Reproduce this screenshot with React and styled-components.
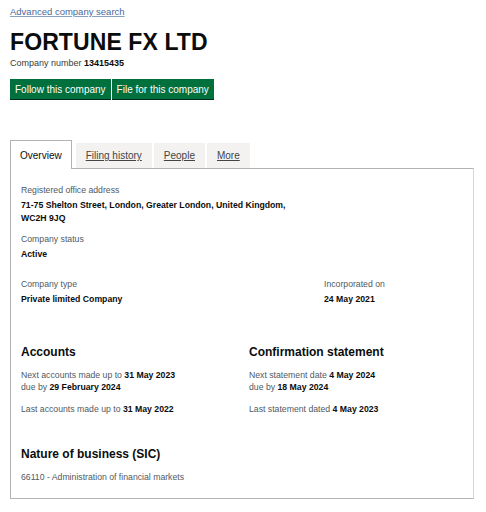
import styled, { createGlobalStyle } from "styled-components";

const Global = createGlobalStyle`
  body {
    margin: 0;
    background: #ffffff;
    font-family: "Liberation Sans", Arial, sans-serif;
    color: #0b0c0c;
  }
`;

const Page = styled.div`
  width: 486px;
  padding: 6px 12px 0 10px;
  box-sizing: border-box;
`;

const BackLink = styled.a`
  display: block;
  font-size: 9.5px;
  line-height: 12px;
  color: #4a6a9a;
  text-decoration: underline;
  text-decoration-color: #8aa0c0;
`;

const Title = styled.h1`
  margin: 12px 0 0;
  font-size: 23px;
  line-height: 24px;
  font-weight: 700;
  letter-spacing: 0.1px;
`;

const CompanyNumber = styled.p`
  margin: 3px 0 0;
  font-size: 9px;
  line-height: 12px;
  color: #3a3a3a;

  strong {
    color: #0b0c0c;
  }
`;

const Actions = styled.div`
  display: flex;
  gap: 1px;
  margin-top: 10px;
`;

const GreenButton = styled.button`
  height: 21px;
  padding: 0 5px;
  border: 0;
  border-bottom: 1px solid #002d18;
  background: #00703c;
  color: #ffffff;
  font-family: inherit;
  font-size: 10px;
  cursor: pointer;
`;

const Tabs = styled.div`
  display: flex;
  align-items: flex-end;
  gap: 2px;
  margin-top: 40px;
`;

const Tab = styled.a`
  display: flex;
  align-items: center;
  box-sizing: border-box;
  font-size: 10px;
  color: ${(p) => (p.$active ? "#0b0c0c" : "#444")};
  text-decoration: ${(p) => (p.$active ? "none" : "underline")};
  background: ${(p) => (p.$active ? "#ffffff" : "#f3f2f1")};
  border: ${(p) => (p.$active ? "1px solid #b1b4b6" : "0")};
  border-bottom: 0;
  height: ${(p) => (p.$active ? "29px" : "25px")};
  padding: 0 ${(p) => (p.$active ? "9px" : "10px")};
  margin-right: ${(p) => (p.$active ? "2px" : "0")};
  margin-bottom: ${(p) => (p.$active ? "-1px" : "0")};
  position: relative;
  z-index: ${(p) => (p.$active ? 1 : 0)};
`;

const Panel = styled.div`
  width: 464px;
  box-sizing: border-box;
  border: 1px solid #b1b4b6;
  border-right-color: #d4d6d8;
  padding: 15px 10px 15px;
`;

const Label = styled.div`
  font-size: 8.7px;
  line-height: 12px;
  color: #505a5f;
`;

const Value = styled.div`
  margin-top: 3px;
  font-size: 8.7px;
  line-height: 13px;
  font-weight: 700;
`;

const Field = styled.div`
  margin-top: ${(p) => p.$top || 0}px;
`;

const Row = styled.div`
  display: grid;
  grid-template-columns: ${(p) => p.$cols};
  column-gap: ${(p) => p.$gap || 0}px;
  margin-top: ${(p) => p.$top || 0}px;
`;

const Heading = styled.h2`
  margin: 0;
  font-size: 12px;
  line-height: 16px;
  font-weight: 700;
`;

const Line = styled.p`
  margin: ${(p) => p.$top || 0}px 0 0;
  font-size: 8.7px;
  line-height: 12px;
  color: #505a5f;

  strong {
    color: #0b0c0c;
  }
`;

export default function App() {
  return (
    <>
      <Global />
      <Page>
        <BackLink href="#">Advanced company search</BackLink>
        <Title>FORTUNE FX LTD</Title>
        <CompanyNumber>
          Company number <strong>13415435</strong>
        </CompanyNumber>
        <Actions>
          <GreenButton>Follow this company</GreenButton>
          <GreenButton>File for this company</GreenButton>
        </Actions>

        <Tabs>
          <Tab $active>Overview</Tab>
          <Tab href="#">Filing history</Tab>
          <Tab href="#">People</Tab>
          <Tab href="#">More</Tab>
        </Tabs>
        <Panel>
          <Field>
            <Label>Registered office address</Label>
            <Value>
              71-75 Shelton Street, London, Greater London, United Kingdom,
              <br />
              WC2H 9JQ
            </Value>
          </Field>
          <Field $top={8}>
            <Label>Company status</Label>
            <Value>Active</Value>
          </Field>

          <Row $cols="1fr 139px" $top={17}>
            <Field>
              <Label>Company type</Label>
              <Value>Private limited Company</Value>
            </Field>
            <Field>
              <Label>Incorporated on</Label>
              <Value>24 May 2021</Value>
            </Field>
          </Row>

          <Row $cols="1fr 1fr" $gap={14} $top={38}>
            <div>
              <Heading>Accounts</Heading>
              <Line $top={9}>
                Next accounts made up to <strong>31 May 2023</strong>
              </Line>
              <Line>
                due by <strong>29 February 2024</strong>
              </Line>
              <Line $top={10}>
                Last accounts made up to <strong>31 May 2022</strong>
              </Line>
            </div>
            <div>
              <Heading>Confirmation statement</Heading>
              <Line $top={9}>
                Next statement date <strong>4 May 2024</strong>
              </Line>
              <Line>
                due by <strong>18 May 2024</strong>
              </Line>
              <Line $top={10}>
                Last statement dated <strong>4 May 2023</strong>
              </Line>
            </div>
          </Row>

          <Field $top={31}>
            <Heading>Nature of business (SIC)</Heading>
            <Line $top={9}>66110 - Administration of financial markets</Line>
          </Field>
        </Panel>
      </Page>
    </>
  );
}
